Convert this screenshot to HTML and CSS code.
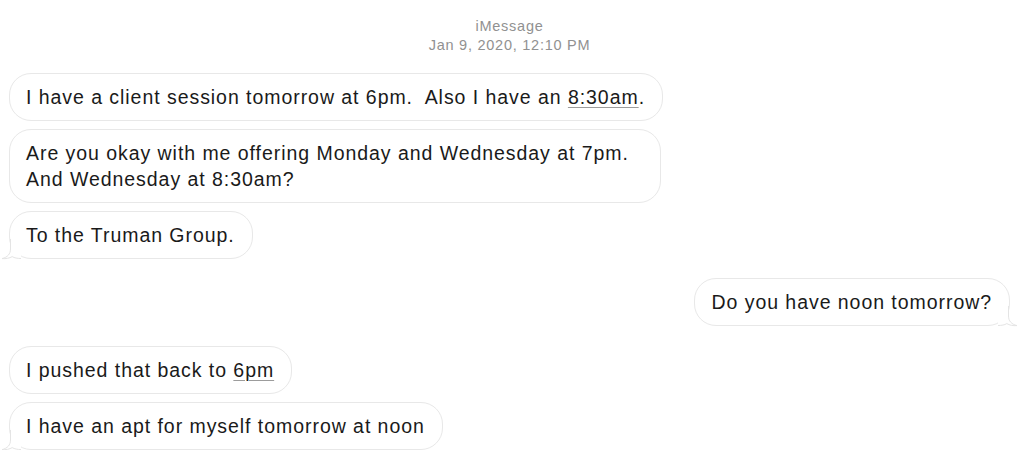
FILE: index.html
```html
<!DOCTYPE html>
<html lang="en">
<head>
<meta charset="utf-8">
<title>iMessage</title>
<link rel="stylesheet" href="styles.css">
</head>
<body>
<div class="chat">
  <header class="chat-header">
    <div class="service">iMessage</div>
    <div class="stamp">Jan 9, 2020, 12:10 PM</div>
  </header>

  <div class="group group-in group-first">
    <div class="bubble">I have a client session tomorrow at 6pm.&nbsp; Also I have an <span class="link">8:30am</span>.</div>
    <div class="bubble bubble-wide">Are you okay with me offering Monday and Wednesday at 7pm.<br>And Wednesday at 8:30am?</div>
    <div class="bubble has-tail">To the Truman Group.<svg class="tail" viewBox="0 0 20 20" width="20" height="20" aria-hidden="true"><path class="tail-fill" d="M9.5 0 L9.5 10 C9.5 15 6.5 18.3 1 19.6 C5 19.9 8.5 19.2 11.2 17.6 C13.5 19 16.5 19.5 20 19.5 L20 0 Z"/><path class="tail-line" d="M9.5 0 L9.5 10 C9.5 15 6.5 18.3 1 19.6 C5 19.9 8.5 19.2 11.2 17.6 C13.5 19 16.5 19.5 20 19.5"/></svg></div>
  </div>

  <div class="group group-out">
    <div class="bubble has-tail tail-right">Do you have noon tomorrow?<svg class="tail" viewBox="0 0 20 20" width="20" height="20" aria-hidden="true"><path class="tail-fill" d="M9.5 0 L9.5 10 C9.5 15 6.5 18.3 1 19.6 C5 19.9 8.5 19.2 11.2 17.6 C13.5 19 16.5 19.5 20 19.5 L20 0 Z"/><path class="tail-line" d="M9.5 0 L9.5 10 C9.5 15 6.5 18.3 1 19.6 C5 19.9 8.5 19.2 11.2 17.6 C13.5 19 16.5 19.5 20 19.5"/></svg></div>
  </div>

  <div class="group group-in">
    <div class="bubble">I pushed that back to <span class="link">6pm</span></div>
    <div class="bubble has-tail">I have an apt for myself tomorrow at noon<svg class="tail" viewBox="0 0 20 20" width="20" height="20" aria-hidden="true"><path class="tail-fill" d="M9.5 0 L9.5 10 C9.5 15 6.5 18.3 1 19.6 C5 19.9 8.5 19.2 11.2 17.6 C13.5 19 16.5 19.5 20 19.5 L20 0 Z"/><path class="tail-line" d="M9.5 0 L9.5 10 C9.5 15 6.5 18.3 1 19.6 C5 19.9 8.5 19.2 11.2 17.6 C13.5 19 16.5 19.5 20 19.5"/></svg></div>
  </div>
</div>
</body>
</html>
```

FILE: styles.css
```css
* {
  box-sizing: border-box;
}

html, body {
  margin: 0;
  padding: 0;
  background: #ffffff;
}

body {
  font-family: "Liberation Sans", Arial, Helvetica, sans-serif;
  color: #1a1a1a;
}

.chat {
  display: flex;
  flex-direction: column;
  padding: 17px 14px 0 9px;
}

.chat-header {
  display: flex;
  flex-direction: column;
  align-items: center;
  font-size: 14.5px;
  line-height: 19px;
  letter-spacing: 0.75px;
  color: #919191;
  margin-bottom: 18px;
}

.group {
  display: flex;
  flex-direction: column;
  gap: 8px;
}

.group-in {
  align-items: flex-start;
}

.group-out {
  align-items: flex-end;
  margin-top: 19px;
}

.group-out + .group-in {
  margin-top: 20px;
}

.bubble {
  position: relative;
  background: #ffffff;
  border: 1px solid #e8e8e8;
  border-radius: 22px;
  padding: 10px 17px 10px 16px;
  font-size: 19.5px;
  line-height: 26px;
  letter-spacing: 0.95px;
  white-space: nowrap;
}

.bubble-wide {
  width: 652px;
}

.link {
  text-decoration: underline;
  text-decoration-color: #9c9c9c;
  text-decoration-thickness: 1px;
  text-underline-offset: 3px;
}

.tail {
  position: absolute;
  left: -9px;
  bottom: -1px;
  overflow: visible;
}

.tail-right .tail {
  left: auto;
  right: -9px;
  transform: scaleX(-1);
}

.tail-fill {
  fill: #ffffff;
  stroke: none;
}

.tail-line {
  fill: none;
  stroke: #e4e4e4;
  stroke-width: 1;
}
```
